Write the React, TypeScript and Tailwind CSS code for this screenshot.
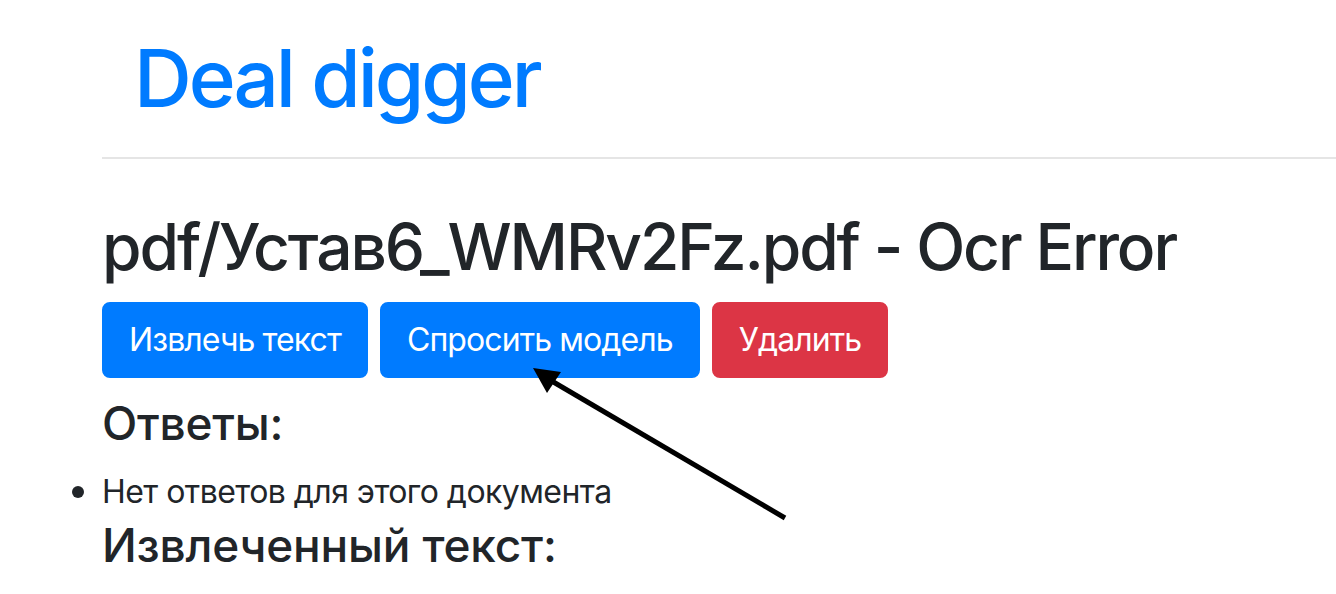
const buttons = [
  { label: "Извлечь текст", cls: "bg-[#007bff] border-[#007bff]" },
  { label: "Спросить модель", cls: "bg-[#007bff] border-[#007bff]" },
  { label: "Удалить", cls: "bg-[#dc3545] border-[#dc3545]" },
];

export default function App() {
  return (
    <div className="relative h-[594px] w-[1336px] overflow-hidden bg-white font-['Inter','Noto_Sans',sans-serif] text-[#212529]">
      <div className="pl-[102px]">
        <div className="pt-[30px] pl-[32px] text-[80px] leading-[96px] font-medium tracking-[-0.038em] text-[#007bff]">Deal digger</div>
        <hr className="mt-[31px] border-t-2 border-[#e5e5e5]" />

        <h1 className="mt-[49px] text-[64px] leading-[77px] font-medium tracking-[-0.033em]">pdf/Устав6_WMRv2Fz.pdf - Ocr Error</h1>

        <div className="mt-[17px] flex gap-[12px]">
          {buttons.map((b) => (
            <button key={b.label} className={`h-[76px] rounded-[8px] border-2 px-[25px] text-[32px] leading-[48px] tracking-[-0.028em] text-white ${b.cls}`}>
              {b.label}
            </button>
          ))}
        </div>

        <h4 className="mt-[18px] text-[46px] leading-[55px] font-medium tracking-[-0.005em]">Ответы:</h4>
        <ul className="mt-[15px] list-disc text-[32px] leading-[48px] tracking-[-0.017em] marker:text-[36px]">
          <li>Нет ответов для этого документа</li>
        </ul>
        <h4 className="mt-[2px] text-[46px] leading-[55px] font-medium tracking-[-0.004em]">Извлеченный текст:</h4>
      </div>

      {/* annotation arrow */}
      <svg className="absolute left-0 top-0" width="1336" height="594" viewBox="0 0 1336 594">
        <line x1="785" y1="518" x2="550" y2="380" stroke="#000" strokeWidth="5" />
        <polygon points="533,368 561,372 547,393" fill="#000" />
      </svg>
    </div>
  );
}
